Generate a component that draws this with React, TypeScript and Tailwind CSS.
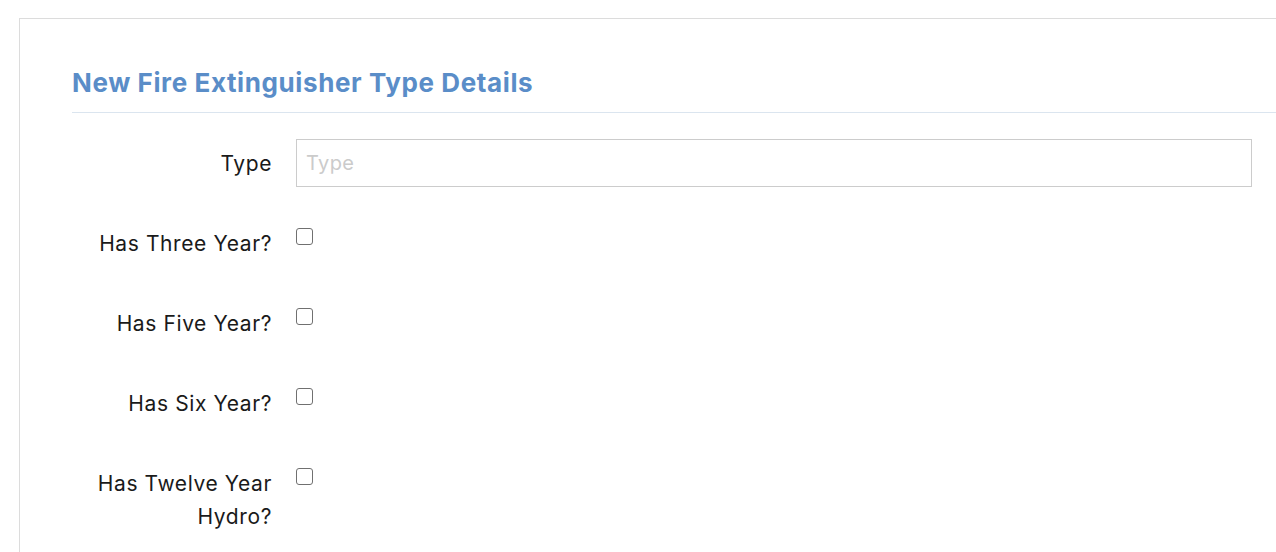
import React from "react";

function Checkbox() {
  return (
    <span className="mt-[1px] block h-[17px] w-[17px] rounded-[3px] border border-[#707070] bg-white" />
  );
}

function CheckRow({ label, className }: { label: React.ReactNode; className: string }) {
  return (
    <div className={`flex items-start ${className}`}>
      <label className="mr-[-1px] w-[200px] shrink-0 text-right text-[21px] leading-[33px] tracking-[0.6px] text-[#1a1a1a]">
        {label}
      </label>
      <div className="ml-[25px]">
        <Checkbox />
      </div>
    </div>
  );
}

export default function App() {
  return (
    <div className="h-[552px] w-full overflow-hidden bg-white font-['Inter',sans-serif]">
      <div className="ml-[19px] mt-[18px] w-[1400px] border border-[#dcdcdc] px-[52px] pb-[40px]">
        <h2 className="mt-[46px] border-b border-[#dbe5ef] pb-[11px] text-[26px] font-bold leading-[36px] tracking-[0.6px] text-[#5a8dc8]">
          New Fire Extinguisher Type Details
        </h2>
        <div className="mt-[26px] flex items-center">
          <label className="mr-[-1px] w-[200px] shrink-0 text-right text-[21px] leading-[33px] tracking-[0.6px] text-[#1a1a1a]">
            Type
          </label>
          <input
            placeholder="Type"
            className="ml-[25px] h-[48px] w-[956px] border border-[#cccccc] bg-white px-[9px] text-[20px] tracking-[0.4px] text-[#1a1a1a] outline-none placeholder:text-[#cbcbcb]"
          />
        </div>
        <CheckRow label="Has Three Year?" className="mt-[40px]" />
        <CheckRow label="Has Five Year?" className="mt-[47px]" />
        <CheckRow label="Has Six Year?" className="mt-[47px]" />
        <CheckRow
          label={
            <>
              Has Twelve Year
              <br />
              Hydro?
            </>
          }
          className="mt-[47px]"
        />
      </div>
    </div>
  );
}
